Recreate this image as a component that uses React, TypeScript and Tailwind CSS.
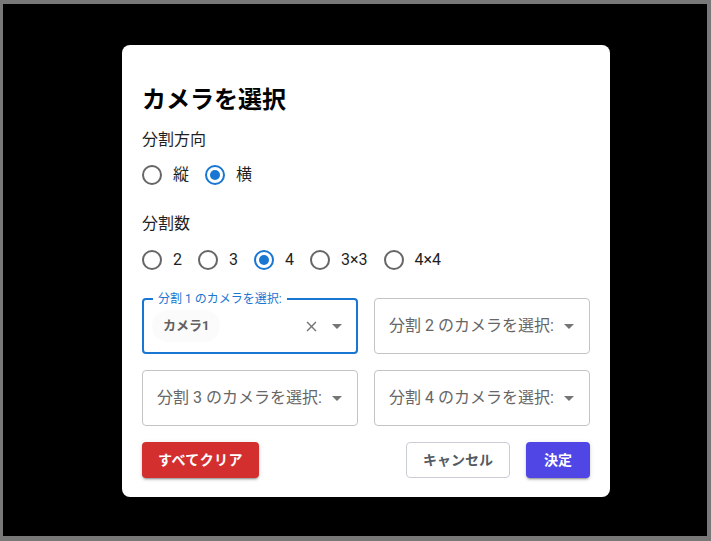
import React from "react";

const FONT = { fontFamily: 'Roboto, "Noto Sans CJK JP", "Noto Sans", sans-serif' };

function Radio({ label, checked }: { label: string; checked?: boolean }) {
  return (
    <label className="flex items-center -ml-[11px] mr-4">
      <span className="p-[9px] flex">
        <svg width="24" height="24" viewBox="0 0 24 24">
          <circle cx="12" cy="12" r="9" fill="none" stroke={checked ? "#1976d2" : "#666666"} strokeWidth="2" />
          {checked && <circle cx="12" cy="12" r="5" fill="#1976d2" />}
        </svg>
      </span>
      <span className="text-[16px] text-[#1f1f1f]">{label}</span>
    </label>
  );
}

function Arrow() {
  return (
    <svg width="24" height="24" viewBox="0 0 24 24">
      <path d="M7 10l5 5 5-5z" fill="#757575" />
    </svg>
  );
}

function EmptyField({ n }: { n: number }) {
  return (
    <div className="flex-1 h-[56px] rounded border border-[#c4c4c4] flex items-center pl-[14px] pr-[8px]">
      <span className="flex-1 text-[16px] text-[#666666] whitespace-nowrap">
        分割 {n} のカメラを選択:
      </span>
      <span className="flex">
        <Arrow />
      </span>
    </div>
  );
}

const SHADOW =
  "shadow-[0_3px_1px_-2px_rgba(0,0,0,0.2),0_2px_2px_0_rgba(0,0,0,0.14),0_1px_5px_0_rgba(0,0,0,0.12)]";

export default function App() {
  return (
    <div
      className="w-[711px] h-[541px] bg-black border-[#787878] border-t-[4px] border-l-[3px] border-r-[4px] border-b-[5px] pt-[41px] pl-[119px]"
      style={FONT}
    >
      <div className="w-[488px] h-[452px] bg-white rounded-lg px-5 pt-[36px] pb-[19px] flex flex-col">
        <h2 className="h-[38px] text-[24px] leading-[38px] font-bold text-black">カメラを選択</h2>
        <div className="mt-[9px] h-6 leading-6 text-[16px] text-[#1f1f1f]">分割方向</div>
        <div className="mt-[4px] h-[38px] flex items-center">
          <Radio label="縦" />
          <Radio label="横" checked />
        </div>
        <div className="mt-[18px] h-6 leading-6 text-[16px] text-[#1f1f1f]">分割数</div>
        <div className="mt-[5px] h-[38px] flex items-center">
          <Radio label="2" />
          <Radio label="3" />
          <Radio label="4" checked />
          <Radio label="3×3" />
          <Radio label="4×4" />
        </div>

        <div className="mt-[19px] grid grid-cols-2 gap-4">
          <div className="relative h-[56px] rounded border-2 border-[#1976d2] flex items-center pl-[8px] pr-[7px]">
            <span className="absolute -top-[8px] left-[9px] px-[5px] bg-white text-[12px] leading-[14px] text-[#1976d2] whitespace-nowrap">
              分割 1 のカメラを選択:
            </span>
            <span className="h-[32px] rounded-2xl bg-[#fbfbfb] px-[11px] flex items-center text-[13px] font-bold text-[#616161]">
              カメラ1
            </span>
            <span className="flex-1" />
            <span className="w-[28px] h-[28px] flex items-center justify-center">
              <svg width="17" height="17" viewBox="0 0 24 24">
                <path
                  d="M19 6.41L17.59 5 12 10.59 6.41 5 5 6.41 10.59 12 5 17.59 6.41 19 12 13.41 17.59 19 19 17.59 13.41 12z"
                  fill="#757575"
                />
              </svg>
            </span>
            <span className="flex">
              <Arrow />
            </span>
          </div>
          <EmptyField n={2} />
          <EmptyField n={3} />
          <EmptyField n={4} />
        </div>

        <div className="mt-4 flex items-center">
          <button className={`h-9 px-4 rounded bg-[#d32f2f] text-white text-[14px] font-bold tracking-[0.4px] ${SHADOW}`}>
            すべてクリア
          </button>
          <span className="flex-1" />
          <button className="h-9 px-4 rounded border border-[#c9ced6] bg-white text-[#555b63] text-[14px] font-bold">
            キャンセル
          </button>
          <button className={`ml-4 h-9 min-w-[64px] px-4 rounded bg-[#4f46e5] text-white text-[14px] font-bold ${SHADOW}`}>
            決定
          </button>
        </div>
      </div>
    </div>
  );
}
